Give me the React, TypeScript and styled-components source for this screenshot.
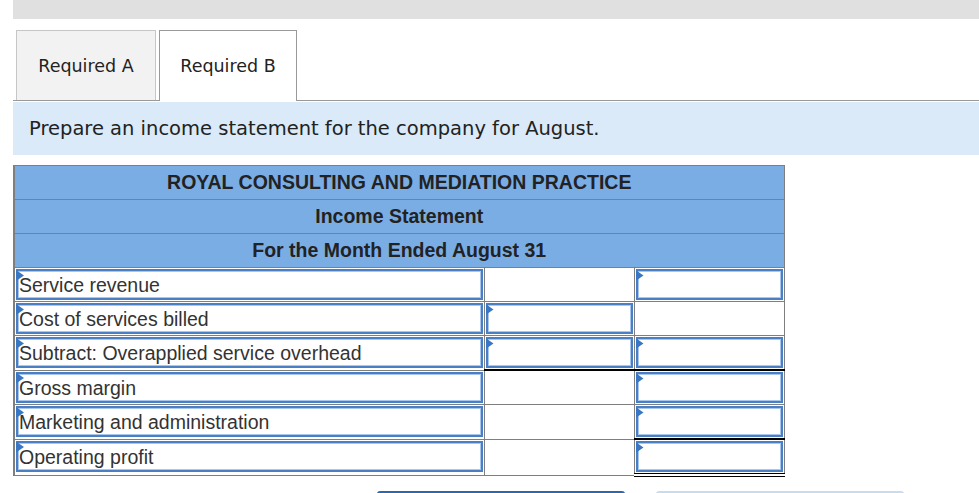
import React from "react";
import styled, { createGlobalStyle, css } from "styled-components";

const GlobalStyle = createGlobalStyle`
  html, body {
    margin: 0;
    padding: 0;
    background: #ffffff;
  }
  body {
    font-family: "DejaVu Sans", Verdana, sans-serif;
    overflow: hidden;
  }
`;

const Page = styled.div`
  width: 966px;
  margin-left: 13px;
  height: 493px;
  overflow: hidden;
`;

const TopBar = styled.div`
  height: 19px;
  background: #e0e0e0;
`;

const TabStrip = styled.div`
  display: flex;
  align-items: flex-end;
  gap: 3px;
  margin-top: 11px;
  padding-left: 3px;
  border-bottom: 1px solid #999999;
`;

const Tab = styled.div<{ $active?: boolean }>`
  display: flex;
  align-items: center;
  justify-content: center;
  box-sizing: border-box;
  font-family: "DejaVu Sans", Verdana, sans-serif;
  font-size: 17.5px;
  color: #222222;
  ${(p) =>
    p.$active
      ? css`
          width: 138px;
          height: 71px;
          margin-bottom: -1px;
          background: #ffffff;
          border: 1px solid #999999;
          border-bottom: none;
        `
      : css`
          width: 140px;
          height: 70px;
          background: #f2f2f2;
          border: 1px solid #c6c6c6;
          border-bottom: none;
        `}
`;

const Banner = styled.div`
  display: flex;
  align-items: center;
  height: 53px;
  margin-top: 1px;
  padding-left: 16px;
  background: #daeaf8;
  font-size: 19.5px;
  color: #222222;
`;

const Statement = styled.table`
  margin-top: 10px;
  width: 771px;
  table-layout: fixed;
  border-collapse: collapse;
  font-family: "Liberation Sans", Arial, sans-serif;
  border-left: 2px solid #7f7f7f;
`;

const HeadCell = styled.td`
  height: 33px;
  padding: 0;
  background: #7bade5;
  border: 1px solid #7f7f7f;
  text-align: center;
  font-weight: bold;
  font-size: 19.5px;
  color: #222222;
`;

const BodyCell = styled.td<{ $rule?: "single" | "double" }>`
  padding: 1px;
  border: 1px solid #7f7f7f;
  vertical-align: top;
  ${(p) =>
    p.$rule === "single" &&
    css`
      border-bottom: 2px solid #000000;
    `}
  ${(p) =>
    p.$rule === "double" &&
    css`
      border-bottom: 4px double #000000;
    `}
`;

const Field = styled.div`
  position: relative;
  box-sizing: border-box;
  height: 31px;
  padding-left: 1px;
  border: 2px solid #4a7fc3;
  box-shadow: inset 0 0 0 1px #a9c7ec;
  background: #ffffff;
  font-size: 19.5px;
  line-height: 29px;
  color: #333333;
  white-space: nowrap;
`;

const Marker = styled.span`
  position: absolute;
  top: -1px;
  left: -2px;
  width: 8px;
  height: 11px;
  background: #3a77c2;
  clip-path: polygon(0 0, 100% 50%, 0 100%);
`;

const ButtonRow = styled.div`
  display: flex;
  gap: 31px;
  margin-top: 14px;
  padding-left: 364px;
`;

const NavButton = styled.div<{ $primary?: boolean }>`
  width: 248px;
  height: 40px;
  border-radius: 3px;
  background: ${(p) => (p.$primary ? "#2f70b9" : "#dbe8f5")};
  border-top: 2px solid ${(p) => (p.$primary ? "#2c68ad" : "#c8dcef")};
`;

type Line = {
  label: string;
  mid: boolean;
  right: boolean;
  midRule?: "single" | "double";
  rightRule?: "single" | "double";
};

const lines: Line[] = [
  { label: "Service revenue", mid: false, right: true },
  { label: "Cost of services billed", mid: true, right: false },
  {
    label: "Subtract: Overapplied service overhead",
    mid: true,
    right: true,
    midRule: "single",
    rightRule: "single",
  },
  { label: "Gross margin", mid: false, right: true },
  { label: "Marketing and administration", mid: false, right: true, rightRule: "single" },
  { label: "Operating profit", mid: false, right: true, rightRule: "double" },
];

const Entry = ({ children }: { children?: React.ReactNode }) => (
  <Field>
    <Marker />
    {children}
  </Field>
);

export default function App() {
  return (
    <>
      <GlobalStyle />
      <Page>
        <TopBar />
        <TabStrip>
          <Tab>Required A</Tab>
          <Tab $active>Required B</Tab>
        </TabStrip>
        <Banner>Prepare an income statement for the company for August.</Banner>
        <Statement>
          <colgroup>
            <col style={{ width: 470 }} />
            <col style={{ width: 150 }} />
            <col style={{ width: 150 }} />
          </colgroup>
          <tbody>
            <tr>
              <HeadCell colSpan={3}>ROYAL CONSULTING AND MEDIATION PRACTICE</HeadCell>
            </tr>
            <tr>
              <HeadCell colSpan={3}>Income Statement</HeadCell>
            </tr>
            <tr>
              <HeadCell colSpan={3}>For the Month Ended August 31</HeadCell>
            </tr>
            {lines.map((l) => (
              <tr key={l.label}>
                <BodyCell>
                  <Entry>{l.label}</Entry>
                </BodyCell>
                <BodyCell $rule={l.midRule}>{l.mid && <Entry />}</BodyCell>
                <BodyCell $rule={l.rightRule}>{l.right && <Entry />}</BodyCell>
              </tr>
            ))}
          </tbody>
        </Statement>
        <ButtonRow>
          <NavButton $primary />
          <NavButton />
        </ButtonRow>
      </Page>
    </>
  );
}
